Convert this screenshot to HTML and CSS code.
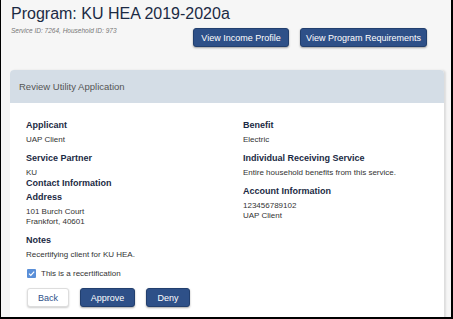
FILE: index.html
```html
<!DOCTYPE html>
<html lang="en">
  <head>
    <meta charset="UTF-8" />
    <meta name="viewport" content="width=device-width, initial-scale=1.0" />
    <title>Review Utility Application</title>
    <link rel="stylesheet" href="styles.css">
  </head>
  <body>
    <div class="frame">
      <div class="page-header">
        <h1>Program: KU HEA 2019-2020a</h1>
        <div class="header-row">
          <div class="ids">Service ID: 7264, Household ID: 973</div>
          <div class="header-actions">
            <button class="btn btn-primary btn-wide">View Income Profile</button>
            <button class="btn btn-primary btn-wider">View Program Requirements</button>
          </div>
        </div>
      </div>

      <div class="card">
        <div class="card-header">Review Utility Application</div>
        <div class="card-body">
          <div class="columns">
            <div class="col">
              <div class="field">
                <h4>Applicant</h4>
                <div class="value">UAP Client</div>
              </div>
              <div class="field tight">
                <h4>Service Partner</h4>
                <div class="value">KU</div>
              </div>
              <h4 class="subhead">Contact Information</h4>
              <div class="field">
                <h4>Address</h4>
                <div class="value">101 Burch Court</div>
                <div class="value">Frankfort, 40601</div>
              </div>
              <div class="field">
                <h4>Notes</h4>
                <div class="value">Recertifying client for KU HEA.</div>
              </div>
            </div>
            <div class="col">
              <div class="field">
                <h4>Benefit</h4>
                <div class="value">Electric</div>
              </div>
              <div class="field">
                <h4>Individual Receiving Service</h4>
                <div class="value">Entire household benefits from this service.</div>
              </div>
              <div class="field">
                <h4>Account Information</h4>
                <div class="value">123456789102</div>
                <div class="value">UAP Client</div>
              </div>
            </div>
          </div>

          <label class="check">
            <span class="box">
              <svg width="9" height="9" viewBox="0 0 9 9">
                <path d="M2 4.6 L3.8 6.4 L7.2 2.6" fill="none" stroke="#fff" stroke-width="1.2" />
              </svg>
            </span>
            This is a recertification
          </label>

          <div class="actions">
            <button class="btn btn-default">Back</button>
            <button class="btn btn-primary btn-approve">Approve</button>
            <button class="btn btn-primary btn-deny">Deny</button>
          </div>
        </div>
      </div>
    </div>
  </body>
</html>
```

FILE: styles.css
```css
body {
  margin: 0;
  font-family: "Liberation Sans", Arial, sans-serif;
  background-color: #fff;
}
.frame {
  width: 453px;
  height: 319px;
  box-sizing: border-box;
  border-left: 1px solid #000;
  border-right: 2px solid #000;
  border-bottom: 2px solid #000;
  background-color: #f6f6f6;
  overflow: hidden;
}
.page-header {
  padding: 5px 24px 0 10px;
  height: 70px;
  box-sizing: border-box;
}
h1 {
  margin: 0;
  font-size: 16px;
  font-weight: normal;
  line-height: 18px;
  color: #1b2a44;
  white-space: nowrap;
}
.header-row {
  display: flex;
  justify-content: space-between;
  align-items: flex-start;
  margin-top: 3px;
}
.ids {
  font-size: 6.5px;
  font-style: italic;
  color: #777;
  line-height: 10px;
}
.header-actions {
  display: flex;
  gap: 11px;
  margin-top: 2px;
}
.btn {
  height: 19px;
  padding: 0;
  font-family: inherit;
  font-size: 9px;
  border-radius: 3px;
  cursor: pointer;
  white-space: nowrap;
}
.btn-primary {
  background: #2e5088;
  color: #fff;
  border: 1px solid #223f6e;
  box-shadow: 0 1px 2px rgba(0, 0, 0, 0.35);
}
.btn-default {
  background: #fff;
  color: #2e5088;
  border: 1px solid #ddd;
  box-shadow: 0 1px 2px rgba(0, 0, 0, 0.2);
}
.btn-wide {
  width: 96px;
}
.btn-wider {
  width: 127px;
}
.card {
  margin-left: 9px;
  width: 434px;
  background: #fff;
  border-radius: 4px 4px 0 0;
  box-shadow: 2px 0 2px rgba(0, 0, 0, 0.1);
}
.card-header {
  height: 33px;
  line-height: 33px;
  padding-left: 9px;
  background: #d4dde6;
  border-radius: 4px 4px 0 0;
  font-size: 9.5px;
  color: #555;
}
.card-body {
  padding: 16px 16px 20px 16px;
}
.columns {
  display: grid;
  grid-template-columns: 217px 1fr;
}
.field {
  margin-bottom: 7px;
}
.field.tight {
  margin-bottom: 0;
}
h4 {
  margin: 0 0 4px;
  font-size: 9px;
  line-height: 12px;
  font-weight: bold;
  color: #1b2a44;
}
.subhead {
  line-height: 10px;
  margin-bottom: 3px;
}
.value {
  font-size: 8px;
  line-height: 10px;
  color: #333;
}
.check {
  display: flex;
  align-items: center;
  gap: 5px;
  margin-top: 1px;
  height: 10px;
  padding-left: 1px;
  font-size: 8px;
  color: #333;
}
.box {
  width: 9px;
  height: 9px;
  background: #5a8fd8;
  border-radius: 1px;
  display: flex;
}
.actions {
  display: flex;
  gap: 11px;
  margin-top: 10px;
  padding-left: 1px;
}
.btn-default {
  width: 42px;
}
.btn-approve {
  width: 55px;
}
.btn-deny {
  width: 44px;
}
```
